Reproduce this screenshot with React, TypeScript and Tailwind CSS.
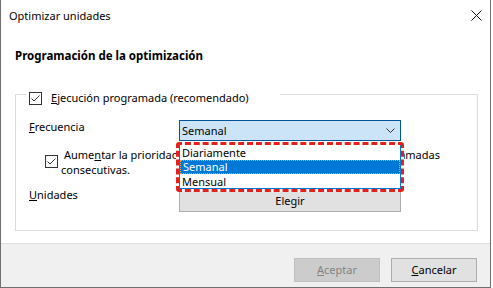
import React from "react";

function CheckBox() {
  return (
    <svg width="13" height="13" viewBox="0 0 13 13" className="shrink-0">
      <rect x="0.5" y="0.5" width="12" height="12" fill="#fff" stroke="#333" />
      <path d="M2.5 6.5 L5 9 L10.5 3.5" fill="none" stroke="#333" strokeWidth="1" />
    </svg>
  );
}

export default function App() {
  return (
    <div className="relative w-[493px] h-[288px] bg-white overflow-hidden text-[11px] leading-[16px] text-black font-['Noto_Sans',sans-serif]">
      <div className="w-[491px] h-[288px] flex flex-col bg-white border-l border-r border-b border-[#6f6f6f]">
        {/* title bar */}
        <div className="h-[31px] shrink-0 flex items-center justify-between pl-[8px] pr-[8px]">
          <span>Optimizar unidades</span>
          <svg width="11" height="11" viewBox="0 0 11 11">
            <path d="M0.5 0.5 L10.5 10.5 M10.5 0.5 L0.5 10.5" stroke="#111" strokeWidth="1" />
          </svg>
        </div>

        {/* content */}
        <div className="flex-1 pl-[14px]">
          <div className="mt-[17px] font-bold text-[11.5px]">Programación de la optimización</div>

          <div className="mt-[30px] w-[463px] h-[137px] border border-[#dcdcdc]">
            <div className="-mt-[5px] ml-[11px] w-fit bg-white pl-[2px] pr-[31px] h-[16px] flex items-center gap-[9px]">
              <CheckBox />
              <span>
                <u>E</u>jecución programada (recomendado)
              </span>
            </div>

            <div className="mt-[14px] pl-[13px] flex items-start">
              <div className="w-[150px] -mt-[1px]">
                <u>F</u>recuencia
              </div>
              <div className="w-[222px] h-[21px] border border-[#005499] bg-[#cce4f7] flex items-center justify-between pl-[2px] pr-[5px]">
                <span>Semanal</span>
                <svg width="9" height="5" viewBox="0 0 9 5">
                  <path d="M0.5 0.5 L4.5 4.5 L8.5 0.5" fill="none" stroke="#333" strokeWidth="1" />
                </svg>
              </div>
            </div>

            <div className="mt-[6px] pl-[29px] flex items-start leading-[15px]">
              <div className="mt-[8px]">
                <CheckBox />
              </div>
              <div className="ml-[3px]">
                <div className="w-[379px] flex justify-between whitespace-nowrap pl-[3px]">
                  <span>
                    Aume<u>n</u>tar la prioridad de la tarea
                  </span>
                  <span>ejecuciones programadas</span>
                </div>
                <div>consecutivas.</div>
              </div>
            </div>

            <div className="mt-[10px] pl-[13px] flex items-start">
              <div className="w-[150px]">
                <u>U</u>nidades
              </div>
              <div className="mt-[2px] w-[222px] h-[23px] border border-[#adadad] bg-[#e1e1e1] flex items-center justify-center">
                Elegir
              </div>
            </div>
          </div>
        </div>

        {/* footer */}
        <div className="h-[44px] shrink-0 border-t border-[#dfdfdf] bg-[#f0f0f0] pt-[14px] pr-[13px] flex justify-end gap-[11px]">
          <div className="w-[86px] h-[24px] border border-[#bfbfbf] bg-[#cccccc] text-[#838383] flex items-center justify-center">
            <span>
              <u>A</u>ceptar
            </span>
          </div>
          <div className="w-[86px] h-[24px] border border-[#adadad] bg-[#e1e1e1] flex items-center justify-center">
            <span>
              <u>C</u>ancelar
            </span>
          </div>
        </div>
      </div>

      {/* open dropdown list */}
      <div className="absolute left-[176px] top-[142px] w-[228px] h-[50px] border-[3px] border-dashed border-[#e3211c] rounded-[3px] bg-white">
        <div className="h-full border-x border-b border-[#0078d7] flex flex-col">
          <div className="h-[15px] pl-[2px] flex items-center">Diariamente</div>
          <div className="h-[14px] pl-[2px] flex items-center bg-[#0078d7] text-white border border-dotted border-[#f5a040]">
            Semanal
          </div>
          <div className="h-[15px] pl-[2px] flex items-center">Mensual</div>
        </div>
      </div>
    </div>
  );
}
